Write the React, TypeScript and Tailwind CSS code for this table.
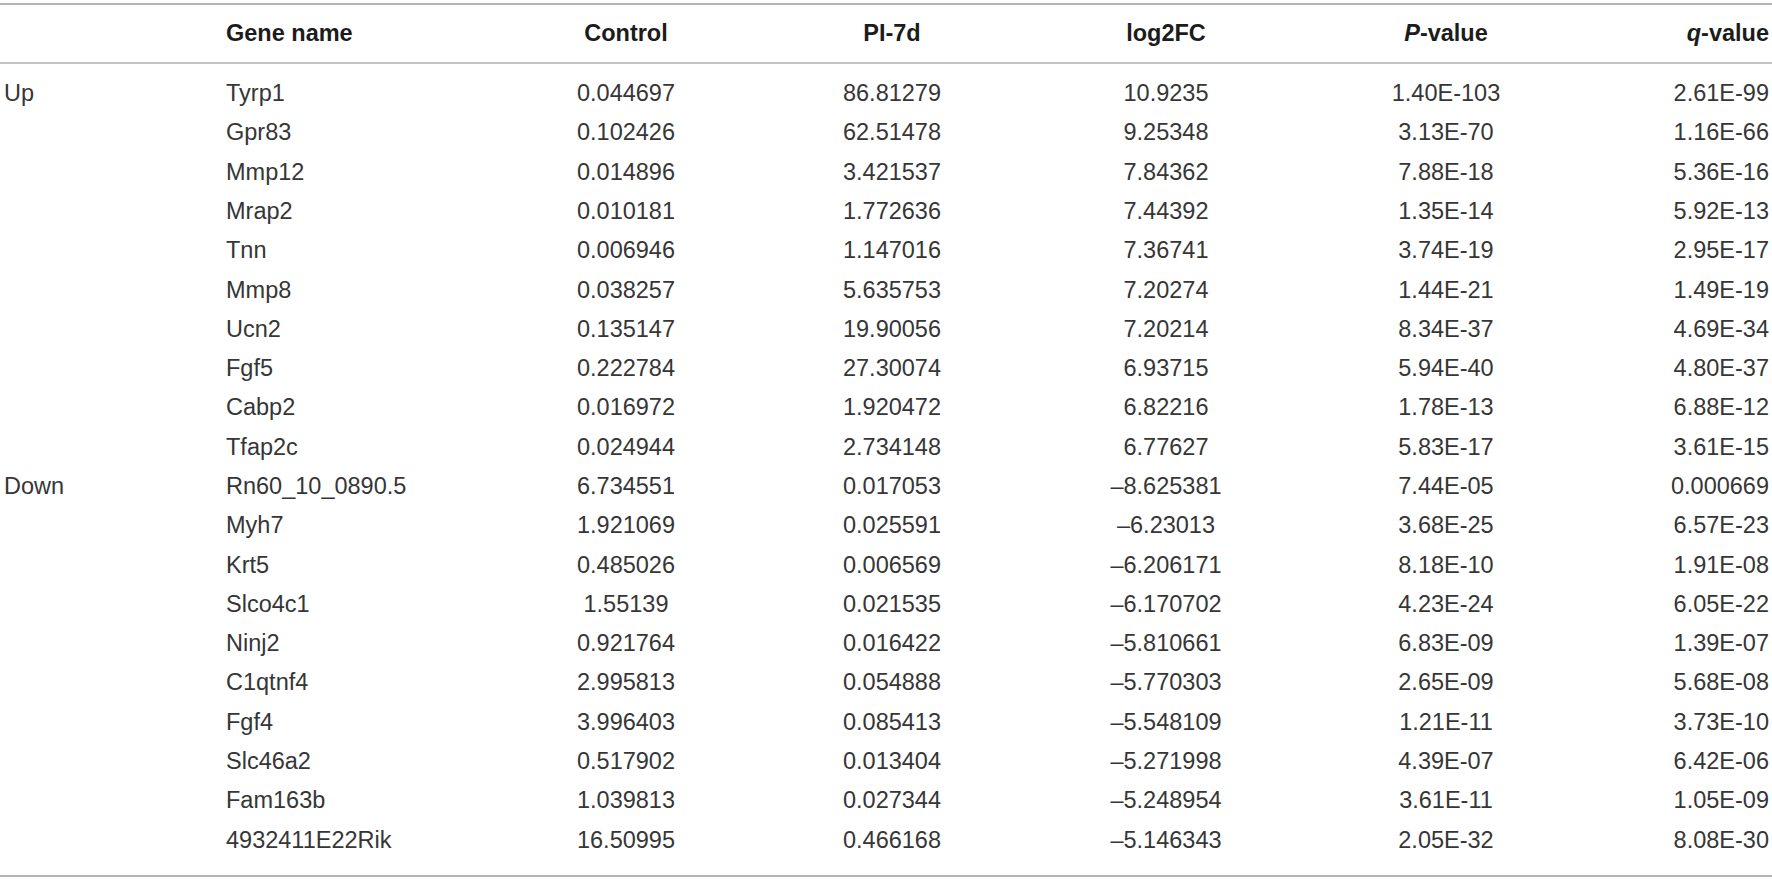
import React from 'react';

type Row = {
  group?: string;
  gene: string;
  control: string;
  pi7d: string;
  log2fc: string;
  p: string;
  q: string;
};

const rows: Row[] = [
  { group: 'Up', gene: 'Tyrp1', control: '0.044697', pi7d: '86.81279', log2fc: '10.9235', p: '1.40E-103', q: '2.61E-99' },
  { gene: 'Gpr83', control: '0.102426', pi7d: '62.51478', log2fc: '9.25348', p: '3.13E-70', q: '1.16E-66' },
  { gene: 'Mmp12', control: '0.014896', pi7d: '3.421537', log2fc: '7.84362', p: '7.88E-18', q: '5.36E-16' },
  { gene: 'Mrap2', control: '0.010181', pi7d: '1.772636', log2fc: '7.44392', p: '1.35E-14', q: '5.92E-13' },
  { gene: 'Tnn', control: '0.006946', pi7d: '1.147016', log2fc: '7.36741', p: '3.74E-19', q: '2.95E-17' },
  { gene: 'Mmp8', control: '0.038257', pi7d: '5.635753', log2fc: '7.20274', p: '1.44E-21', q: '1.49E-19' },
  { gene: 'Ucn2', control: '0.135147', pi7d: '19.90056', log2fc: '7.20214', p: '8.34E-37', q: '4.69E-34' },
  { gene: 'Fgf5', control: '0.222784', pi7d: '27.30074', log2fc: '6.93715', p: '5.94E-40', q: '4.80E-37' },
  { gene: 'Cabp2', control: '0.016972', pi7d: '1.920472', log2fc: '6.82216', p: '1.78E-13', q: '6.88E-12' },
  { gene: 'Tfap2c', control: '0.024944', pi7d: '2.734148', log2fc: '6.77627', p: '5.83E-17', q: '3.61E-15' },
  { group: 'Down', gene: 'Rn60_10_0890.5', control: '6.734551', pi7d: '0.017053', log2fc: '–8.625381', p: '7.44E-05', q: '0.000669' },
  { gene: 'Myh7', control: '1.921069', pi7d: '0.025591', log2fc: '–6.23013', p: '3.68E-25', q: '6.57E-23' },
  { gene: 'Krt5', control: '0.485026', pi7d: '0.006569', log2fc: '–6.206171', p: '8.18E-10', q: '1.91E-08' },
  { gene: 'Slco4c1', control: '1.55139', pi7d: '0.021535', log2fc: '–6.170702', p: '4.23E-24', q: '6.05E-22' },
  { gene: 'Ninj2', control: '0.921764', pi7d: '0.016422', log2fc: '–5.810661', p: '6.83E-09', q: '1.39E-07' },
  { gene: 'C1qtnf4', control: '2.995813', pi7d: '0.054888', log2fc: '–5.770303', p: '2.65E-09', q: '5.68E-08' },
  { gene: 'Fgf4', control: '3.996403', pi7d: '0.085413', log2fc: '–5.548109', p: '1.21E-11', q: '3.73E-10' },
  { gene: 'Slc46a2', control: '0.517902', pi7d: '0.013404', log2fc: '–5.271998', p: '4.39E-07', q: '6.42E-06' },
  { gene: 'Fam163b', control: '1.039813', pi7d: '0.027344', log2fc: '–5.248954', p: '3.61E-11', q: '1.05E-09' },
  { gene: '4932411E22Rik', control: '16.50995', pi7d: '0.466168', log2fc: '–5.146343', p: '2.05E-32', q: '8.08E-30' },
];

const cols = 'grid grid-cols-[226px_274px_252px_280px_268px_292px_180px]';

const App = () => {
  return (
    <div className="w-[1772px] min-h-[881px] bg-white pt-[3px] font-['Liberation_Sans',Arial,sans-serif] text-[23.5px] text-[#363636]">
      <div className="border-t-2 border-b-2 border-[#b4b4b4]">
        {/* header */}
        <div className={`${cols} h-[59px] items-center border-b-2 border-[#c4c4c4] font-bold text-[#1c1c1c]`}>
          <div className="pl-[4px]"></div>
          <div>Gene name</div>
          <div className="text-center">Control</div>
          <div className="text-center">PI-7d</div>
          <div className="text-center">log2FC</div>
          <div className="text-center">
            <i>P</i>-value
          </div>
          <div className="text-right pr-[3px]">
            <i>q</i>-value
          </div>
        </div>

        {/* body */}
        <div className="pt-[10px] pb-[15px]">
          {rows.map((r) => (
            <div key={r.gene} className={`${cols} h-[39.3px] items-center`}>
              <div className="pl-[4px]">{r.group ?? ''}</div>
              <div>{r.gene}</div>
              <div className="text-center">{r.control}</div>
              <div className="text-center">{r.pi7d}</div>
              <div className="text-center">{r.log2fc}</div>
              <div className="text-center">{r.p}</div>
              <div className="text-right pr-[3px]">{r.q}</div>
            </div>
          ))}
        </div>
      </div>
    </div>
  );
};

export default App;
